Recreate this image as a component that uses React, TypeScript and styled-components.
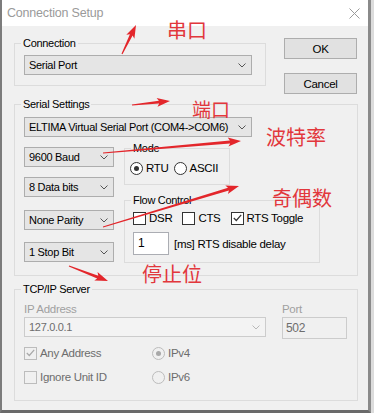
import React from 'react'
import styled, { createGlobalStyle } from 'styled-components'

const GlobalStyle = createGlobalStyle`
  html, body {
    margin: 0;
    padding: 0;
    background: #dcdcdc;
  }
`

// window chrome
const Page = styled.div`
  position: relative;
  width: 374px;
  height: 413px;
  overflow: hidden;
`

const Frame = styled.div`
  box-sizing: border-box;
  width: 371px;
  height: 413px;
  background: #f0f0f0;
  border-left: 2px solid #7c7c7c;
  border-right: 3px solid #8a8a8a;
  border-bottom: 3px solid #6a6a6a;
  font-family: 'Liberation Sans', Arial, sans-serif;
  font-size: 11px;
  letter-spacing: -0.3px;
  color: #000;
`

const TitleBar = styled.div`
  height: 26px;
  display: flex;
  align-items: center;
  justify-content: space-between;
  padding: 0 8px 0 5px;
  background: #fff;
  color: #9a9a9a;
  font-size: 12.5px;
  letter-spacing: -0.2px;
`

const Body = styled.div`
  display: flex;
  flex-direction: column;
  padding: 10px 0 0 12px;
`

const TopRow = styled.div`
  display: flex;
  align-items: flex-start;
  gap: 18px;
`

const ButtonColumn = styled.div`
  display: flex;
  flex-direction: column;
  gap: 14px;
  margin-top: 2px;
`

const Button = styled.div`
  box-sizing: border-box;
  width: 73px;
  height: 21px;
  display: flex;
  align-items: center;
  justify-content: center;
  background: #e1e1e1;
  border: 1px solid #adadad;
  font-size: 11.5px;
`

// group boxes: the legend always sits 9px in from the group's left edge
const Group = styled.fieldset<{ $w: number; $mt?: number; $pad: string }>`
  box-sizing: border-box;
  width: ${({ $w }) => $w}px;
  min-width: 0;
  margin: ${({ $mt }) => $mt || 0}px 0 0 0;
  padding: ${({ $pad }) => $pad};
  border: 1px solid #dcdcdc;
`

const Legend = styled.legend<{ $ml: number; $disabled?: boolean }>`
  margin-left: ${({ $ml }) => $ml}px;
  padding: 0 2px;
  line-height: 14px;
  color: ${({ $disabled }) => ($disabled ? '#a0a0a0' : '#000')};
`

// inputs
const Combo = styled.div<{ $w: number; $mt?: number; $disabled?: boolean }>`
  box-sizing: border-box;
  width: ${({ $w }) => $w}px;
  height: 20px;
  margin-top: ${({ $mt }) => $mt || 0}px;
  display: flex;
  align-items: center;
  justify-content: space-between;
  padding: 0 5px 0 4px;
  background: ${({ $disabled }) => ($disabled ? '#f3f3f3' : '#e5e5e5')};
  border: 1px solid ${({ $disabled }) => ($disabled ? '#cccccc' : '#adadad')};
  color: ${({ $disabled }) => ($disabled ? '#6d6d6d' : '#000')};
  white-space: nowrap;
`

const TextBox = styled.div<{ $w: number; $h: number; $disabled?: boolean }>`
  box-sizing: border-box;
  width: ${({ $w }) => $w}px;
  height: ${({ $h }) => $h}px;
  display: flex;
  align-items: ${({ $disabled }) => ($disabled ? 'center' : 'flex-start')};
  padding: ${({ $disabled }) => ($disabled ? '0 3px' : '3px 4px')};
  background: ${({ $disabled }) => ($disabled ? '#f0f0f0' : '#fff')};
  border: 1px solid ${({ $disabled }) => ($disabled ? '#cccccc' : '#abadb3')};
  color: ${({ $disabled }) => ($disabled ? '#6d6d6d' : '#000')};
  font-size: 12px;
`

const Column = styled.div<{ $mt?: number; $gap?: number }>`
  display: flex;
  flex-direction: column;
  margin-top: ${({ $mt }) => $mt || 0}px;
  gap: ${({ $gap }) => $gap || 0}px;
`

const SettingsRow = styled.div`
  display: flex;
  align-items: flex-start;
  gap: 10px;
  margin-top: 4px;
`

const OptionRow = styled.div<{ $gap: number; $mt?: number }>`
  display: flex;
  align-items: center;
  gap: ${({ $gap }) => $gap}px;
  height: 14px;
  margin-top: ${({ $mt }) => $mt || 0}px;
`

const Option = styled.label<{ $disabled?: boolean }>`
  display: flex;
  align-items: center;
  gap: 3px;
  white-space: nowrap;
  color: ${({ $disabled }) => ($disabled ? '#6d6d6d' : '#000')};
  font-size: 11.5px;
`

const Box = styled.span<{ $disabled?: boolean }>`
  box-sizing: border-box;
  width: 13px;
  height: 13px;
  display: flex;
  align-items: center;
  justify-content: center;
  background: ${({ $disabled }) => ($disabled ? '#f0f0f0' : '#fff')};
  border: 1px solid ${({ $disabled }) => ($disabled ? '#bcbcbc' : '#333')};
`

const Round = styled(Box)`
  border-radius: 50%;
`

const Dot = styled.span<{ $disabled?: boolean }>`
  width: 5px;
  height: 5px;
  border-radius: 50%;
  background: ${({ $disabled }) => ($disabled ? '#a8a8a8' : '#333')};
`

const DelayRow = styled.div`
  display: flex;
  align-items: center;
  gap: 5px;
  margin-top: 7px;
`

const FieldLabel = styled.div`
  line-height: 12px;
  color: #a0a0a0;
  margin-bottom: 2px;
  font-size: 11.5px;
`

const ServerRow = styled.div`
  display: flex;
  gap: 16px;
`

const OptionGrid = styled.div`
  display: grid;
  grid-template-columns: 128px auto;
  grid-auto-rows: 14px;
  row-gap: 10px;
  margin-top: 7px;
`

// red annotations over the dialog
const Overlay = styled.div`
  position: absolute;
  inset: 0;
  pointer-events: none;
`

const Note = styled.span<{ $x: number; $y: number; $size: number }>`
  position: absolute;
  left: ${({ $x }) => $x}px;
  top: ${({ $y }) => $y}px;
  font-family: 'Noto Sans CJK SC', sans-serif;
  font-size: ${({ $size }) => $size}px;
  line-height: 1;
  color: #e2373c;
  white-space: nowrap;
`

const Chevron = ({ color = '#555' }: { color?: string }) => (
  <svg width="8" height="5" viewBox="0 0 8 5">
    <path d="M0.5 0.5 L4 4 L7.5 0.5" fill="none" stroke={color} strokeWidth="1" />
  </svg>
)

const Check = ({ color = '#333' }: { color?: string }) => (
  <svg width="9" height="8" viewBox="0 0 9 8">
    <path d="M0.8 4 L3.3 6.5 L8.2 0.8" fill="none" stroke={color} strokeWidth="1.2" />
  </svg>
)

const CloseX = () => (
  <svg width="11" height="11" viewBox="0 0 11 11">
    <path d="M0.5 0.5 L10.5 10.5 M10.5 0.5 L0.5 10.5" stroke="#9a9a9a" strokeWidth="1" />
  </svg>
)

const arrowPoints = (x1: number, y1: number, x2: number, y2: number, head = 11, hw = 4.5, sw = 1.5) => {
  const dx = x2 - x1
  const dy = y2 - y1
  const len = Math.hypot(dx, dy)
  const ux = dx / len
  const uy = dy / len
  const nx = -uy
  const ny = ux
  const bx = x2 - ux * head
  const by = y2 - uy * head
  const pts = [
    [x1 + nx * 0.5, y1 + ny * 0.5],
    [bx + nx * sw, by + ny * sw],
    [bx - ux * 2 + nx * hw, by - uy * 2 + ny * hw],
    [x2, y2],
    [bx - ux * 2 - nx * hw, by - uy * 2 - ny * hw],
    [bx - nx * sw, by - ny * sw],
    [x1 - nx * 0.5, y1 - ny * 0.5],
  ]
  return pts.map((p) => p.map((v) => v.toFixed(1)).join(',')).join(' ')
}

const ARROWS = [
  [122, 54, 136, 25],
  [132, 105, 170, 101],
  [103, 153, 241, 141],
  [103, 227, 239, 186],
  [69, 266, 108, 281],
]

const NOTES = [
  { text: '串口', x: 167, y: 20, size: 20 },
  { text: '端口', x: 192, y: 99, size: 19 },
  { text: '波特率', x: 266, y: 127, size: 20 },
  { text: '奇偶数', x: 272, y: 188, size: 20 },
  { text: '停止位', x: 142, y: 264, size: 20 },
]

const CheckOption = ({ label, checked, disabled }: { label: string; checked?: boolean; disabled?: boolean }) => (
  <Option $disabled={disabled}>
    <Box $disabled={disabled}>{checked && <Check color={disabled ? '#a8a8a8' : '#333'} />}</Box>
    {label}
  </Option>
)

const RadioOption = ({ label, selected, disabled }: { label: string; selected?: boolean; disabled?: boolean }) => (
  <Option $disabled={disabled}>
    <Round $disabled={disabled}>{selected && <Dot $disabled={disabled} />}</Round>
    {label}
  </Option>
)

const App = () => {
  return (
    <Page>
      <GlobalStyle />
      <Frame>
        <TitleBar>
          <span>Connection Setup</span>
          <CloseX />
        </TitleBar>
        <Body>
          <TopRow>
            <Group $w={252} $pad="5px 8px 10px 9px">
              <Legend $ml={-3}>Connection</Legend>
              <Combo $w={228}>
                Serial Port
                <Chevron />
              </Combo>
            </Group>
            <ButtonColumn>
              <Button>OK</Button>
              <Button>Cancel</Button>
            </ButtonColumn>
          </TopRow>

          <Group $w={344} $mt={3} $pad="6px 8px 12px 9px">
            <Legend $ml={-3}>Serial Settings</Legend>
            <Combo $w={228}>
              ELTIMA Virtual Serial Port (COM4-&gt;COM6)
              <Chevron />
            </Combo>
            <SettingsRow>
              <Column $mt={6}>
                <Combo $w={90}>
                  9600 Baud
                  <Chevron />
                </Combo>
                <Combo $w={90} $mt={10}>
                  8 Data bits
                  <Chevron />
                </Combo>
                <Combo $w={90} $mt={13}>
                  None Parity
                  <Chevron />
                </Combo>
                <Combo $w={90} $mt={12}>
                  1 Stop Bit
                  <Chevron />
                </Combo>
              </Column>
              <Column $gap={8}>
                <Group $w={106} $pad="6px 4px 9px 5px">
                  <Legend $ml={1}>Mode</Legend>
                  <OptionRow $gap={5}>
                    <RadioOption label="RTU" selected />
                    <RadioOption label="ASCII" />
                  </OptionRow>
                </Group>
                <Group $w={196} $pad="4px 4px 7px 8px">
                  <Legend $ml={-2}>Flow Control</Legend>
                  <OptionRow $gap={10}>
                    <CheckOption label="DSR" />
                    <CheckOption label="CTS" />
                    <CheckOption label="RTS Toggle" checked />
                  </OptionRow>
                  <DelayRow>
                    <TextBox $w={36} $h={23}>
                      1
                    </TextBox>
                    <Option>[ms] RTS disable delay</Option>
                  </DelayRow>
                </Group>
              </Column>
            </SettingsRow>
          </Group>

          <Group $w={344} $mt={6} $pad="7px 8px 16px 9px">
            <Legend $ml={-3}>TCP/IP Server</Legend>
            <ServerRow>
              <Column>
                <FieldLabel>IP Address</FieldLabel>
                <Combo $w={242} $disabled>
                  127.0.0.1
                  <Chevron color="#b8b8b8" />
                </Combo>
              </Column>
              <Column>
                <FieldLabel>Port</FieldLabel>
                <TextBox $w={65} $h={22} $disabled>
                  502
                </TextBox>
              </Column>
            </ServerRow>
            <OptionGrid>
              <CheckOption label="Any Address" checked disabled />
              <RadioOption label="IPv4" selected disabled />
              <CheckOption label="Ignore Unit ID" disabled />
              <RadioOption label="IPv6" disabled />
            </OptionGrid>
          </Group>
        </Body>
      </Frame>

      <Overlay>
        <svg width="374" height="413" viewBox="0 0 374 413">
          {ARROWS.map(([x1, y1, x2, y2], i) => (
            <polygon key={i} points={arrowPoints(x1, y1, x2, y2)} fill="#e3262b" />
          ))}
        </svg>
        {NOTES.map((n) => (
          <Note key={n.text} $x={n.x} $y={n.y} $size={n.size}>
            {n.text}
          </Note>
        ))}
      </Overlay>
    </Page>
  )
}

export default App
